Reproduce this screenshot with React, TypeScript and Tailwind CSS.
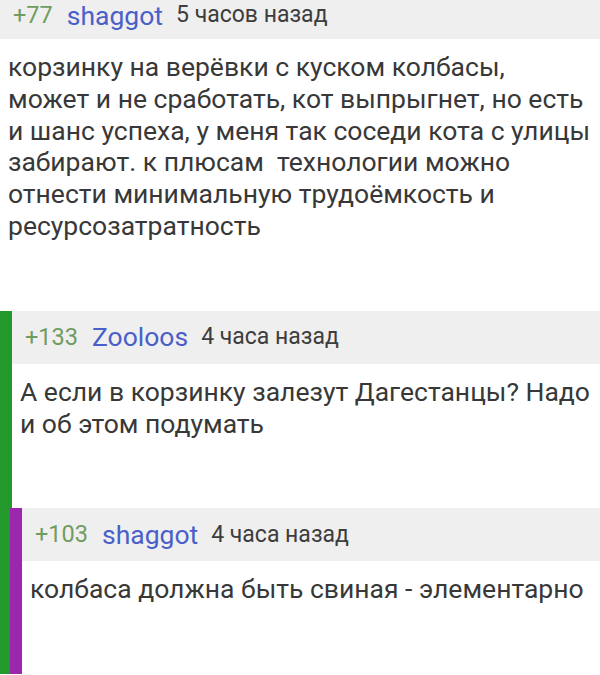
import React from "react";

type Comment = {
  id: string;
  rating: number;
  author: string;
  time: string;
  text: string[];
  depth: number;
};

const COMMENTS: Comment[] = [
  {
    id: "c1",
    rating: 77,
    author: "shaggot",
    time: "5 часов назад",
    depth: 0,
    text: [
      "корзинку на верёвки с куском колбасы,",
      "может и не сработать, кот выпрыгнет, но есть",
      "и шанс успеха, у меня так соседи кота с улицы",
      "забирают. к плюсам  технологии можно",
      "отнести минимальную трудоёмкость и",
      "ресурсозатратность",
    ],
  },
  {
    id: "c2",
    rating: 133,
    author: "Zooloos",
    time: "4 часа назад",
    depth: 1,
    text: ["А если в корзинку залезут Дагестанцы? Надо", "и об этом подумать"],
  },
  {
    id: "c3",
    rating: 103,
    author: "shaggot",
    time: "4 часа назад",
    depth: 2,
    text: ["колбаса должна быть свиная - элементарно"],
  },
];

function CommentItem({ comment, first }: { comment: Comment; first?: boolean }) {
  // the top comment is scrolled partly out of view, so its header is shorter
  const header = first ? "h-[39px] pb-[8px]" : "h-[53px]";
  return (
    <div>
      <div className={`flex items-center bg-[#efefef] pl-[13px] ${header}`}>
        <span className="text-[23.5px] text-[#6f9c5f]">+{comment.rating}</span>
        <span className="ml-[14px] text-[26.5px] text-[#4a5fc9]">{comment.author}</span>
        <span className="ml-[13px] text-[23px] text-[#3d3d3d]">{comment.time}</span>
      </div>
      <div className="pb-[69px] pl-[8px] pt-[12px] text-[26.5px] leading-[31.8px] text-[#383838]">
        {comment.text.map((line, i) => (
          <div key={i} className="whitespace-pre">{line}</div>
        ))}
      </div>
    </div>
  );
}

export default function App() {
  const [c1, c2, c3] = COMMENTS;
  return (
    <div className="h-[675px] w-[600px] overflow-hidden bg-white font-['Roboto',sans-serif]">
      <CommentItem comment={c1} first />
      {/* nested replies get a coloured thread bar on the left */}
      <div className="flex">
        <div className="w-[12px] shrink-0 bg-[#22992a]" />
        <div className="min-w-0 flex-1">
          <CommentItem comment={c2} />
          <div className="-ml-[2px] flex">
            <div className="w-[12px] shrink-0 bg-[#9b27af]" />
            <div className="min-w-0 flex-1">
              <CommentItem comment={c3} />
            </div>
          </div>
        </div>
      </div>
    </div>
  );
}
